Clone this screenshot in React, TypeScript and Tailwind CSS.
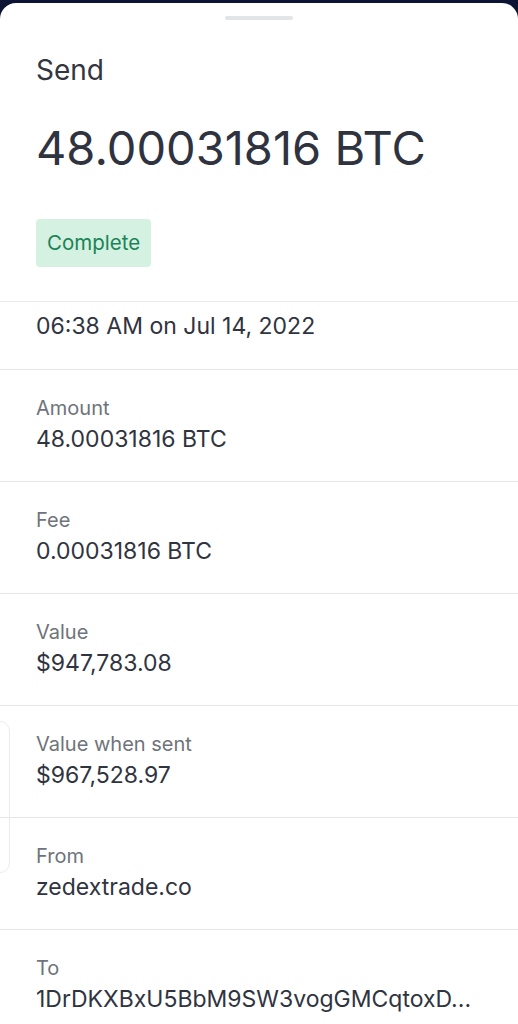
const rows = [
  { label: 'Amount', value: '48.00031816 BTC' },
  { label: 'Fee', value: '0.00031816 BTC' },
  { label: 'Value', value: '$947,783.08' },
  { label: 'Value when sent', value: '$967,528.97' },
  { label: 'From', value: 'zedextrade.co' },
  { label: 'To', value: '1DrDKXBxU5BbM9SW3vogGMCqtoxD...' },
]

export default function App() {
  return (
    <div className="min-h-screen w-[518px] bg-[#0b1533] pt-[3px] font-['Inter',sans-serif]">
      <div className="relative min-h-[1021px] overflow-hidden rounded-t-2xl bg-white">
        {/* drag handle */}
        <div className="flex justify-center pt-[13px]">
          <div className="h-[4px] w-[68px] rounded-full bg-[#e3e4e6]" />
        </div>

        <div className="px-9 pt-[33px]">
          <h2 className="text-[28px] leading-[34px] text-[#32363f]">Send</h2>
          <h1 className="mt-[32px] text-[47px] leading-[58px] text-[#2f3340]">48.00031816 BTC</h1>
          <div className="mt-[42px] inline-flex h-[48px] items-center rounded-[4px] bg-[#d4f1e1] px-[11px] text-[20.5px] text-[#1a8457]">
            Complete
          </div>
        </div>

        <div className="mt-[34px]">
          <div className="h-[68px] border-t border-[#ebebeb] px-9 pt-[10px] text-[23px] leading-[28px] text-[#30343f]">
            06:38 AM on Jul 14, 2022
          </div>
          {rows.map((row) => (
            <div key={row.label} className="h-[112px] border-t border-[#e6e6e6] px-9 pt-[25px]">
              <p className="text-[20px] leading-[26px] text-[#6f737b]">{row.label}</p>
              <p className="mt-[3px] text-[23px] leading-[30px] text-[#30343f]">{row.value}</p>
            </div>
          ))}
        </div>

        {/* faint outline of card behind */}
        <div className="absolute left-[-20px] top-[718px] h-[152px] w-[30px] rounded-[10px] border border-[#ececec]" />
      </div>
    </div>
  )
}
